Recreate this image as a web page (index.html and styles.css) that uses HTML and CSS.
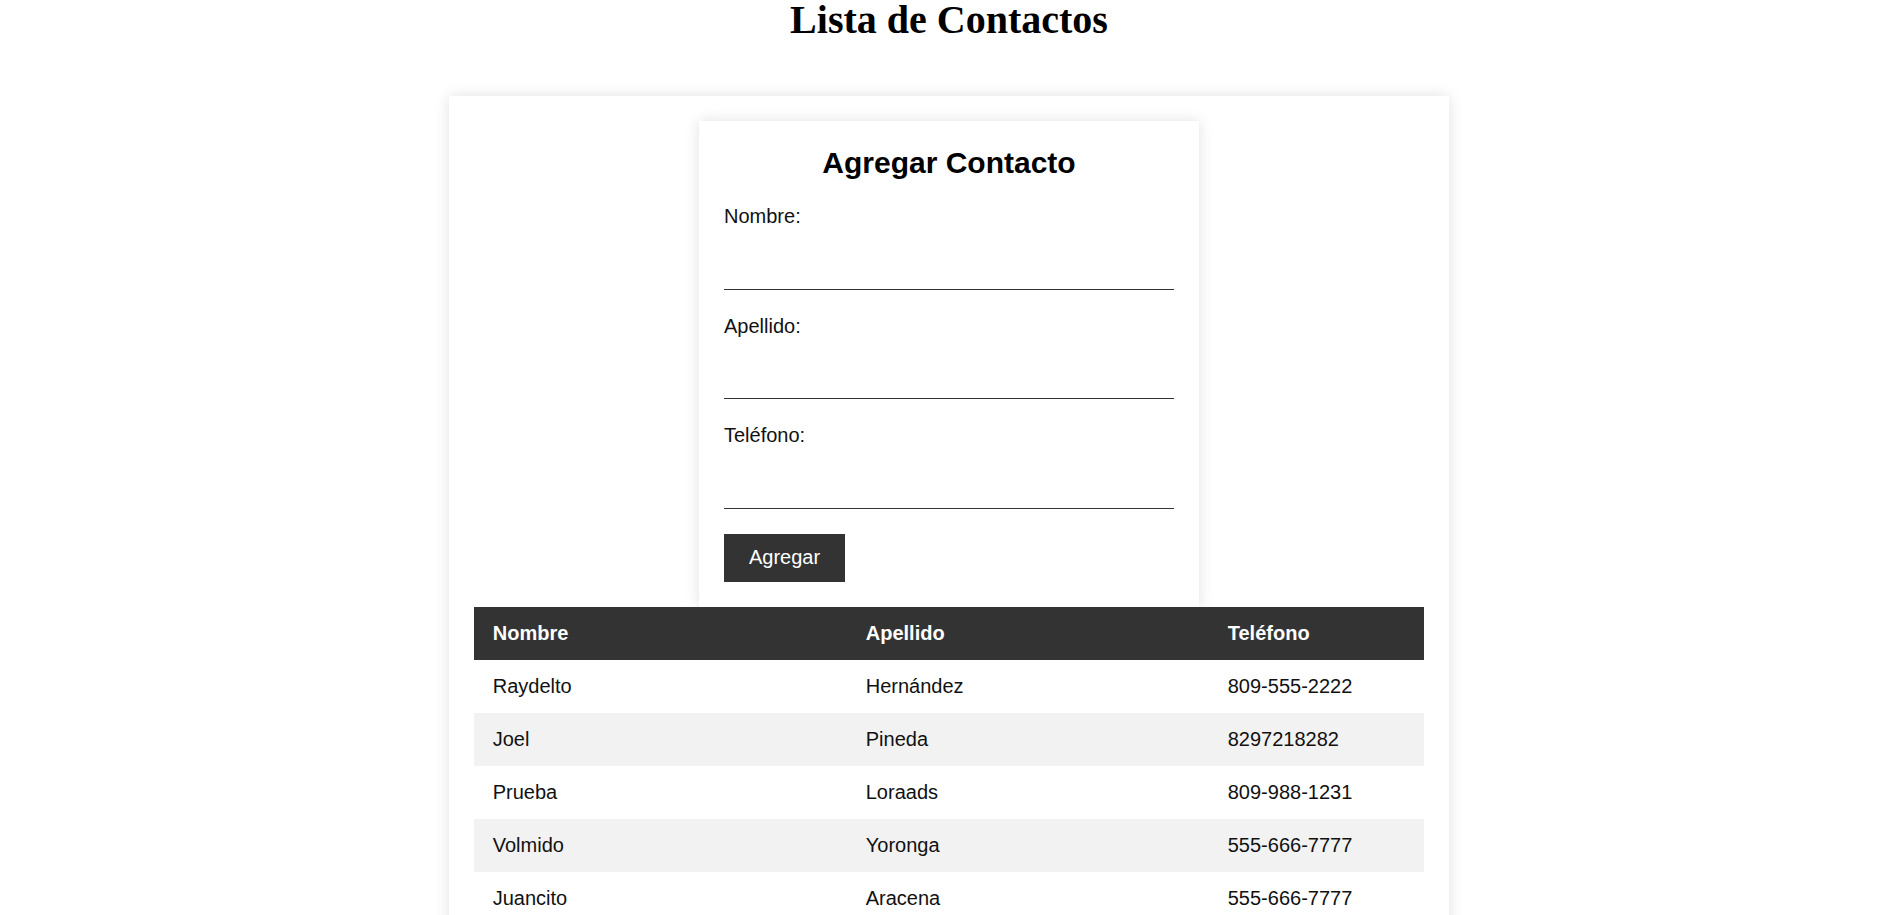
FILE: index.html
```html
<!DOCTYPE html>
<html lang="es">
<head>
<meta charset="utf-8">
<title>Lista de Contactos</title>
<link rel="stylesheet" href="styles.css">
</head>
<body>
<h1 class="page-title">Lista de Contactos</h1>
<div class="container">
  <form class="contact-form">
    <h2 class="form-title">Agregar Contacto</h2>
    <div class="field">
      <label class="field-label" for="nombre">Nombre:</label>
      <input class="field-input" id="nombre" type="text">
    </div>
    <div class="field">
      <label class="field-label" for="apellido">Apellido:</label>
      <input class="field-input" id="apellido" type="text">
    </div>
    <div class="field">
      <label class="field-label" for="telefono">Teléfono:</label>
      <input class="field-input" id="telefono" type="text">
    </div>
    <button class="btn" type="button">Agregar</button>
  </form>
  <table class="contacts">
    <thead>
      <tr><th class="col-nombre">Nombre</th><th class="col-apellido">Apellido</th><th class="col-telefono">Teléfono</th></tr>
    </thead>
    <tbody>
      <tr><td>Raydelto</td><td>Hernández</td><td>809-555-2222</td></tr>
      <tr><td>Joel</td><td>Pineda</td><td>8297218282</td></tr>
      <tr><td>Prueba</td><td>Loraads</td><td>809-988-1231</td></tr>
      <tr><td>Volmido</td><td>Yoronga</td><td>555-666-7777</td></tr>
      <tr><td>Juancito</td><td>Aracena</td><td>555-666-7777</td></tr>
    </tbody>
  </table>
</div>
</body>
</html>
```
FILE: styles.css
```css
html, body {
  margin: 0;
  padding: 0;
  background: #fff;
}

body {
  font-family: "Liberation Sans", Arial, sans-serif;
  font-size: 20px;
  color: #111;
  padding-left: 5px;
}

.page-title {
  font-family: "Liberation Serif", "Times New Roman", serif;
  font-size: 40px;
  font-weight: bold;
  line-height: 40px;
  text-align: center;
  margin: 0 0 56px;
  color: #000;
}

.container {
  width: 950px;
  margin: 0 auto;
  padding: 25px;
  background: #fff;
  box-shadow: 0 0 14px rgba(0, 0, 0, 0.12);
}

.contact-form {
  width: 450px;
  margin: 0 auto;
  padding: 25px;
  background: #fff;
  box-shadow: 0 0 14px rgba(0, 0, 0, 0.12);
}

.form-title {
  font-size: 30px;
  font-weight: bold;
  text-align: center;
  margin: 0 0 25px;
  color: #000;
}

.field {
  margin-bottom: 25px;
}

.field-label {
  display: block;
  margin-bottom: 12.5px;
}

.field-input {
  display: block;
  box-sizing: border-box;
  width: 100%;
  font-family: inherit;
  font-size: 20px;
  padding: 12.5px 0;
  border: none;
  border-bottom: 1px solid #333;
  outline: none;
  background: transparent;
}

.btn {
  display: block;
  font-family: inherit;
  font-size: 20px;
  line-height: 23px;
  padding: 12.5px 25px;
  background: #333;
  color: #fff;
  border: none;
}

.contacts {
  width: 100%;
  border-collapse: collapse;
  table-layout: fixed;
}

.contacts th,
.contacts td {
  box-sizing: border-box;
  text-align: left;
  padding: 15px 18.75px;
  line-height: 23px;
}

.col-nombre { width: 373px; }
.col-apellido { width: 362px; }
.col-telefono { width: 215px; }

.contacts th {
  background: #333;
  color: #fff;
  font-weight: bold;
}

.contacts tbody tr:nth-child(even) {
  background: #f2f2f2;
}
```
